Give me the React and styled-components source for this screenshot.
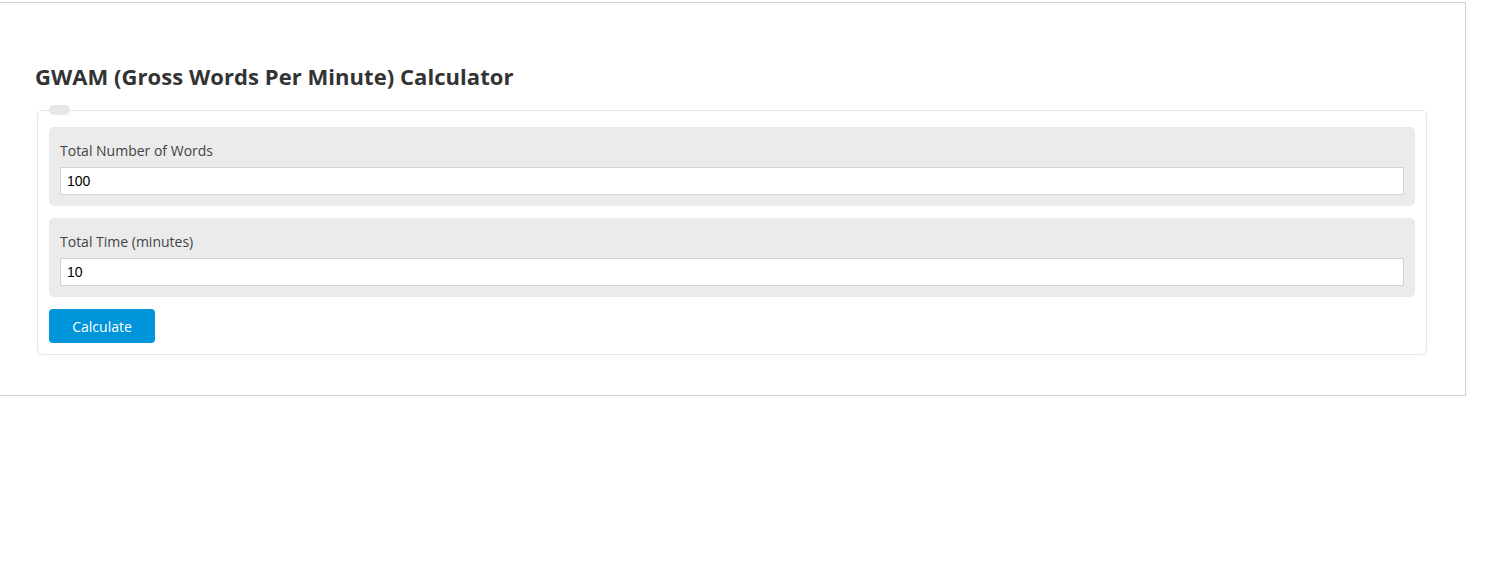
import React, { useState } from 'react';
import styled, { createGlobalStyle } from 'styled-components';

const GlobalStyle = createGlobalStyle`
  body {
    margin: 0;
    background: #fff;
    font-family: "Open Sans", "Noto Sans", sans-serif;
  }
`;

const Page = styled.div`
  margin: 2px 0 0 -1px;
  width: 1467px;
  height: 394px;
  border: 1px solid #cfcfcf;
  box-sizing: border-box;
  padding: 58px 38px 0 37px;
`;

const Title = styled.h2`
  margin: 0 0 14px -2px;
  font-size: 22px;
  line-height: 30px;
  font-weight: 700;
  color: #333;
  letter-spacing: 0.05px;
`;

const Fieldset = styled.fieldset`
  margin: 0;
  border: 1px solid #e8e8e8;
  border-radius: 5px;
  padding: 12px 11px 11px;
  display: flex;
  flex-direction: column;
  gap: 12px;
`;

const Legend = styled.legend`
  width: 21px;
  height: 10px;
  padding: 0;
  background: #e6e7e7;
  border-radius: 5px;
`;

const Field = styled.div`
  background: #eaebea;
  border-radius: 5px;
  padding: 12px 11px 11px;
  display: flex;
  flex-direction: column;
`;

const Label = styled.label`
  font-size: 14px;
  line-height: 23px;
  color: #444;
  margin-bottom: 5px;
`;

const Input = styled.input`
  height: 28px;
  box-sizing: border-box;
  border: 1px solid #d3d3d3;
  padding: 0 6px;
  font-family: "Liberation Sans", Arial, sans-serif;
  font-size: 14px;
  color: #000;
  background: #fff;
  outline: none;
`;

const Button = styled.button`
  align-self: flex-start;
  width: 106px;
  height: 34px;
  border: none;
  border-radius: 4px;
  background: #0095da;
  color: #fff;
  font-family: "Open Sans", "Noto Sans", sans-serif;
  font-size: 14px;
  cursor: pointer;
`;

export default function App() {
  const [words, setWords] = useState('100');
  const [time, setTime] = useState('10');

  return (
    <>
      <GlobalStyle />
      <Page>
        <Title>GWAM (Gross Words Per Minute) Calculator</Title>
        <Fieldset>
          <Legend />
          <Field>
            <Label>Total Number of Words</Label>
            <Input value={words} onChange={(e) => setWords(e.target.value)} />
          </Field>
          <Field>
            <Label>Total Time (minutes)</Label>
            <Input value={time} onChange={(e) => setTime(e.target.value)} />
          </Field>
          <Button>Calculate</Button>
        </Fieldset>
      </Page>
    </>
  );
}
